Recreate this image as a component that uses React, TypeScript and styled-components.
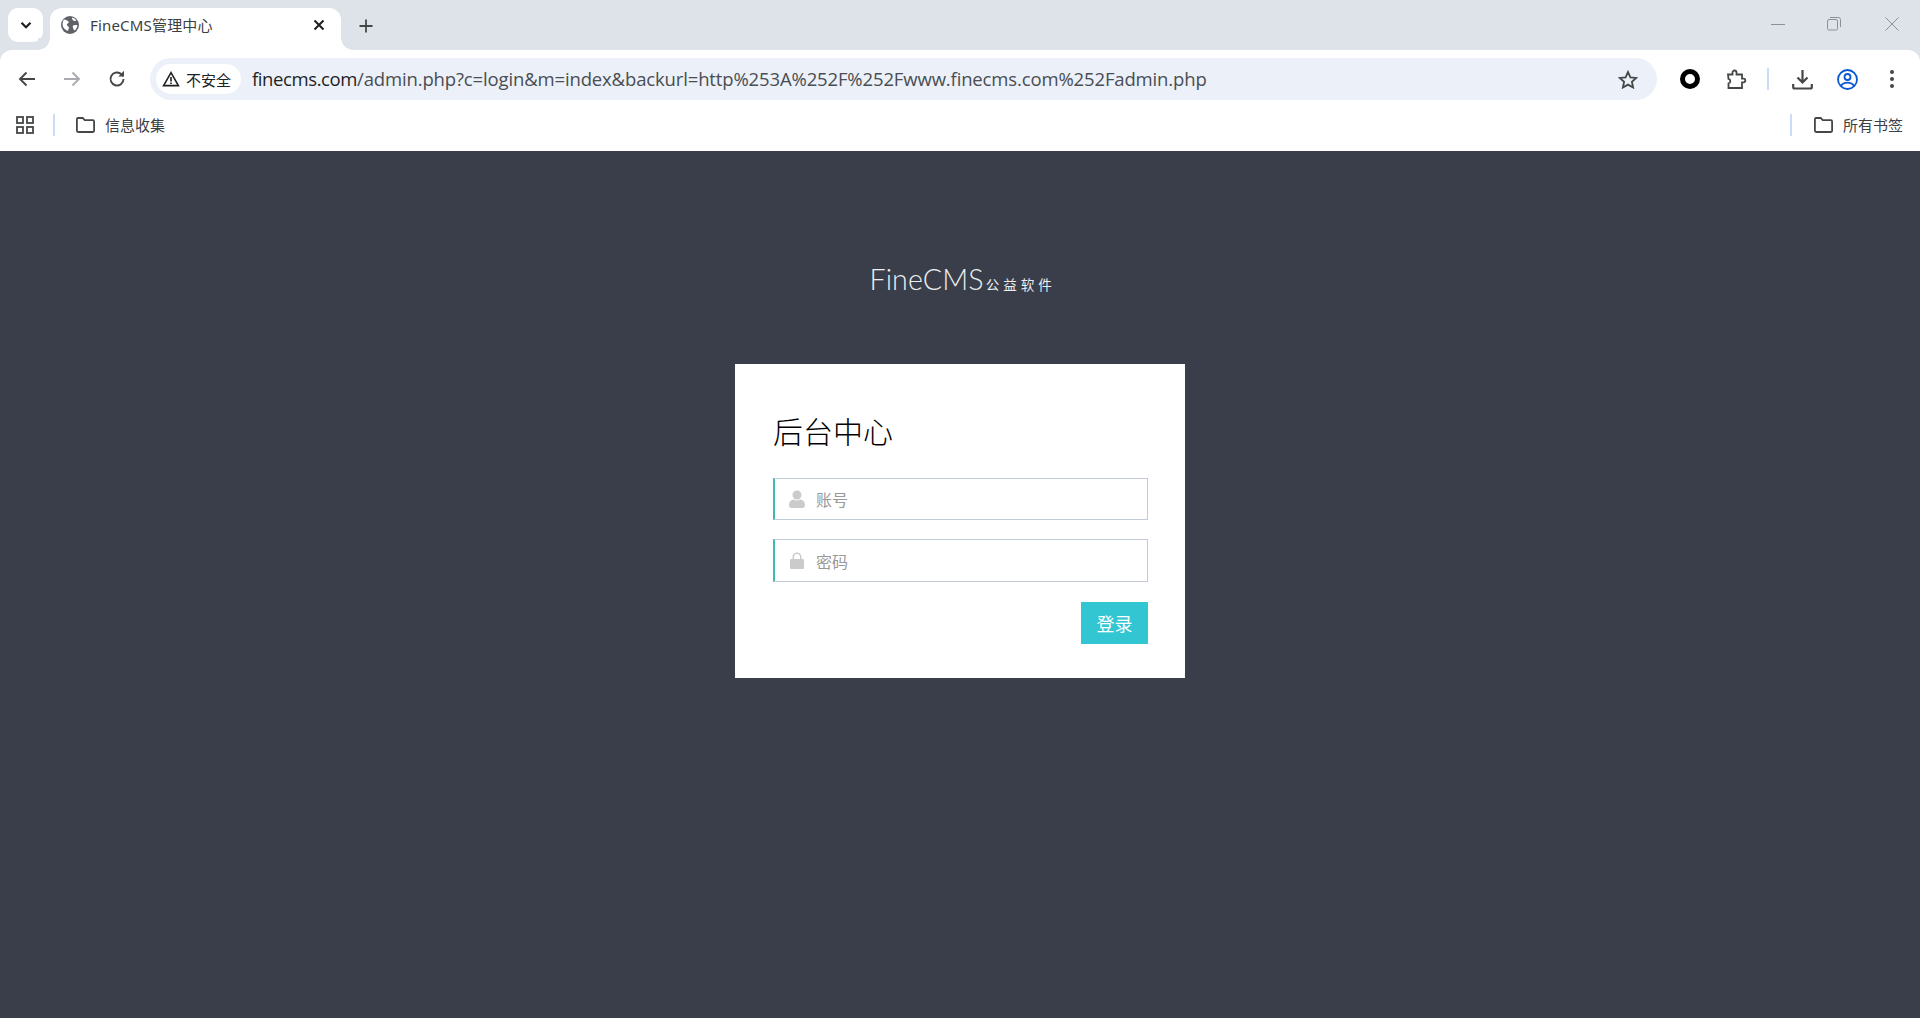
import React from 'react'
import styled, { createGlobalStyle } from 'styled-components'

const UI_FONT = '"Noto Sans", "Noto Sans CJK SC", sans-serif'
const CJK_FONT = '"Noto Sans CJK SC", "Noto Sans", sans-serif'

const GlobalStyle = createGlobalStyle`
  html, body {
    margin: 0;
    padding: 0;
    height: 100%;
    overflow: hidden;
    background: #3a3e4a;
    font-family: ${UI_FONT};
  }
  #root {
    height: 100%;
  }
  * {
    box-sizing: border-box;
  }
`

const Page = styled.div`
  height: 1018px;
  display: flex;
  flex-direction: column;
  background: #dee3ea;
`

const TabStrip = styled.div`
  height: 50px;
  flex: none;
  display: flex;
  align-items: flex-start;
  padding: 8px 0 0 8px;
`

const TabSearch = styled.div`
  width: 35px;
  height: 34px;
  border-radius: 10px;
  background: #fff;
  display: flex;
  align-items: center;
  justify-content: center;
  margin-right: 7px;
`

const Tab = styled.div`
  position: relative;
  width: 291px;
  height: 42px;
  background: #fff;
  border-radius: 12px 12px 0 0;
  display: flex;
  align-items: center;
  padding: 0 16px 8px 11px;

  &::before,
  &::after {
    content: '';
    position: absolute;
    bottom: 0;
    width: 12px;
    height: 12px;
  }
  &::before {
    left: -12px;
    background: radial-gradient(circle at 0 0, #dee3ea 11.5px, #fff 12px);
  }
  &::after {
    right: -12px;
    background: radial-gradient(circle at 100% 0, #dee3ea 11.5px, #fff 12px);
  }
`

const TabTitle = styled.div`
  flex: 1;
  margin-left: 11px;
  font-size: 15px;
  line-height: 20px;
  color: #3c4043;
  white-space: nowrap;
  letter-spacing: 0.18px;
  font-family: ${UI_FONT};
`

const NewTab = styled.div`
  width: 36px;
  height: 36px;
  margin: 0 0 0 7px;
  display: flex;
  align-items: center;
  justify-content: center;
`

const WindowControls = styled.div`
  margin-left: auto;
  display: flex;
  align-items: center;
  height: 32px;
  padding-right: 21px;
`

const WindowControl = styled.svg<{ $gap?: number }>`
  margin-left: ${(p) => p.$gap ?? 0}px;
`

const Toolbar = styled.div`
  height: 57px;
  flex: none;
  background: #fff;
  display: flex;
  align-items: center;
  padding: 1px 10px 0 9px;
  position: relative;
  border-radius: 12px 12px 0 0;
`

const ToolButton = styled.div<{ $gap?: number }>`
  width: 36px;
  height: 36px;
  flex: none;
  margin-left: ${(p) => p.$gap ?? 0}px;
  display: flex;
  align-items: center;
  justify-content: center;
`

const AddressBar = styled.div`
  width: 1507px;
  height: 42px;
  flex: none;
  margin-left: 15px;
  border-radius: 21px;
  background: #ebf0f9;
  display: flex;
  align-items: center;
  padding: 0 19px 0 6px;
`

const SiteChip = styled.div`
  width: 85px;
  height: 30px;
  flex: none;
  background: #fff;
  border-radius: 15px;
  display: flex;
  align-items: center;
  padding-left: 6px;
  gap: 6px;
  font-size: 15px;
  color: #202124;
  font-family: ${CJK_FONT};
  white-space: nowrap;
`

const Url = styled.div`
  flex: 1;
  margin-left: 11px;
  font-size: 18.5px;
  line-height: 24px;
  color: #4a4d52;
  white-space: nowrap;
  overflow: hidden;
  font-family: "Open Sans", "Noto Sans", sans-serif;
  letter-spacing: -0.14px;
`

const UrlHost = styled.span`
  color: #1f1f1f;
  letter-spacing: -0.4px;
`

const ToolDivider = styled.div<{ $gap: number; $right?: number }>`
  width: 2px;
  height: 22px;
  flex: none;
  background: #c9dcf8;
  margin-left: ${(p) => p.$gap}px;
  margin-right: ${(p) => p.$right ?? 0}px;
`

const BookmarkBar = styled.div`
  height: 44px;
  flex: none;
  background: #fff;
  display: flex;
  align-items: center;
  padding: 0 17px 9px 16px;
`

const BookmarkItem = styled.div<{ $gap: number }>`
  margin-left: ${(p) => p.$gap}px;
  display: flex;
  align-items: center;
  gap: 9px;
  font-size: 15px;
  color: #3c4043;
  font-family: ${CJK_FONT};
  white-space: nowrap;
`

const Spacer = styled.div`
  flex: 1;
`

const Main = styled.main`
  flex: 1;
  background: #3a3e4a;
  display: flex;
  flex-direction: column;
  align-items: center;
  padding-top: 111px;
`

const Logo = styled.div`
  height: 36px;
  width: 184px;
  display: flex;
  align-items: baseline;
  color: #eceef0;
  white-space: nowrap;
  margin-left: 3px;
`

const LogoName = styled.span`
  font-family: "Lato", "Liberation Sans", sans-serif;
  font-weight: 300;
  font-size: 28.6px;
  line-height: 34px;
  letter-spacing: 0.1px;
`

const LogoSub = styled.span`
  font-family: ${CJK_FONT};
  font-size: 13.5px;
  letter-spacing: 4px;
  margin-left: 2px;
`

const Card = styled.form`
  width: 450px;
  height: 314px;
  margin-top: 66px;
  background: #fff;
  padding: 46px 37px 0 38px;
  display: flex;
  flex-direction: column;
`

const Title = styled.h3`
  margin: 0;
  height: 40px;
  font-weight: 300;
  font-size: 30px;
  line-height: 40px;
  color: #000;
  font-family: ${CJK_FONT};
`

const Field = styled.label<{ $top: number; $height: number }>`
  height: ${(p) => p.$height}px;
  margin-top: ${(p) => p.$top}px;
  flex: none;
  display: flex;
  align-items: center;
  border: 1px solid #c2cad8;
  border-left: 2px solid #3fb8b2;
  padding-left: 14px;
  gap: 11px;
`

const FieldIcon = styled.span`
  width: 16px;
  flex: none;
  display: flex;
  justify-content: center;
`

const FieldInput = styled.input`
  flex: 1;
  min-width: 0;
  border: 0;
  outline: 0;
  padding: 0;
  background: transparent;
  font-size: 16px;
  font-family: ${CJK_FONT};
  color: #333;

  &::placeholder {
    color: #999;
    opacity: 1;
  }
`

const Actions = styled.div`
  display: flex;
  justify-content: flex-end;
  margin-top: 20px;
`

const LoginButton = styled.button`
  width: 67px;
  height: 42px;
  border: 0;
  padding: 0;
  background: #32c5d2;
  color: #fff;
  font-size: 18px;
  font-family: ${CJK_FONT};
`

const FolderIcon = () => (
  <svg width="21" height="16" viewBox="0 0 21 16" fill="none" stroke="#444746" strokeWidth="1.8">
    <path d="M1.9 2.2a1.2 1.2 0 0 1 1.2-1.2h4.6l2 2.2h8.2a1.2 1.2 0 0 1 1.2 1.2v9.4a1.2 1.2 0 0 1-1.2 1.2H3.1a1.2 1.2 0 0 1-1.2-1.2z" />
  </svg>
)

const App: React.FC = () => (
  <Page>
    <GlobalStyle />
    <TabStrip>
      <TabSearch>
        <svg width="14" height="14" viewBox="0 0 14 14" fill="none" stroke="#1f1f1f" strokeWidth="2.2">
          <path d="M2.5 4.8 7 9.2l4.5-4.4" />
        </svg>
      </TabSearch>
      <Tab>
        <svg width="18" height="18" viewBox="0 0 18 18">
          <circle cx="9" cy="9" r="9" fill="#5f6368" />
          <path d="M3 3.5c2 .2 3.4 1 4.4 2.100.6.8.2 1.600-.6 1.800-.9.2-1.200 1-.8 1.800.5.9 1.600 1 1.900 2 .2.9-.3 2-1 3.600C3.800 14 1.400 11 1.600 8c.1-1.700.5-3.300 1.400-4.500z" fill="#fff" />
          <path d="M11 1.500c1.600.3 3.500 1.500 4.400 3-1 .5-2.200.5-3 0-.9-.5-1.400-1.800-1.400-3zM12 9.500c1.200-.6 3-.7 4.400-.2-.2 2.200-1.200 4-2.800 5.200-1.200-1-2.400-3.700-1.600-5z" fill="#fff" />
        </svg>
        <TabTitle>FineCMS管理中心</TabTitle>
        <svg width="12" height="12" viewBox="0 0 12 12" stroke="#1f1f1f" strokeWidth="2">
          <path d="M1.500 1.500l9 9M10.500 1.500l-9 9" />
        </svg>
      </Tab>
      <NewTab>
        <svg width="14" height="14" viewBox="0 0 14 14" stroke="#444746" strokeWidth="1.8">
          <path d="M7 .5v13M.5 7h13" />
        </svg>
      </NewTab>
      <WindowControls>
        <WindowControl width="14" height="14" viewBox="0 0 14 14" stroke="#8d9196" strokeWidth="1">
          <path d="M0 7.500h14" />
        </WindowControl>
        <WindowControl $gap={42} width="14" height="14" viewBox="0 0 14 14" fill="none" stroke="#8d9196" strokeWidth="1">
          <rect x=".5" y="2.500" width="10" height="10.500" rx="1.500" />
          <path d="M3 .5h8.500a2 2 0 0 1 2 2V10" />
        </WindowControl>
        <WindowControl $gap={44} width="14" height="14" viewBox="0 0 14 14" stroke="#8d9196" strokeWidth="1">
          <path d="M.5.5l13 13M13.500.5l-13 13" />
        </WindowControl>
      </WindowControls>
    </TabStrip>

    <Toolbar>
      <ToolButton>
        <svg width="18" height="16" viewBox="0 0 18 16" fill="none" stroke="#444746" strokeWidth="1.900">
          <path d="M17 8H2M8.500 1.500 2 8l6.500 6.500" />
        </svg>
      </ToolButton>
      <ToolButton $gap={9}>
        <svg width="18" height="16" viewBox="0 0 18 16" fill="none" stroke="#a9abae" strokeWidth="1.900">
          <path d="M1 8h15M9.500 1.500 16 8l-6.500 6.500" />
        </svg>
      </ToolButton>
      <ToolButton $gap={9}>
        <svg width="18" height="18" viewBox="0 0 18 18" fill="none" stroke="#444746" strokeWidth="1.900">
          <path d="M15.500 9a6.500 6.500 0 1 1-1.900-4.600L15.500 6" />
          <path d="M16 .8V6.500h-5.700" fill="#444746" stroke="none" />
        </svg>
      </ToolButton>
      <AddressBar>
        <SiteChip>
          <svg width="18" height="16" viewBox="0 0 18 16" fill="none" stroke="#1f1f1f" strokeWidth="1.600">
            <path d="M9 1.600 1.600 14.600h14.800z" />
            <path d="M9 6v4.500M9 11.500v1.500" />
          </svg>
          不安全
        </SiteChip>
        <Url>
          <UrlHost>finecms.com</UrlHost>
          /admin.php?c=login&amp;m=index&amp;backurl=http%253A%252F%252Fwww.finecms.com%252Fadmin.php
        </Url>
        <svg width="20" height="19" viewBox="0 0 20 19" fill="none" stroke="#444746" strokeWidth="1.800">
          <path d="m10 2 2.400 5.300 5.800.6-4.300 3.900 1.200 5.700L10 14.600l-5.100 2.900 1.200-5.700L1.800 7.900l5.800-.6z" />
        </svg>
      </AddressBar>
      <ToolButton $gap={15}>
        <svg width="20" height="20" viewBox="0 0 20 20" fill="none" stroke="#000" strokeWidth="5">
          <circle cx="10" cy="10" r="7.500" />
        </svg>
      </ToolButton>
      <ToolButton $gap={10}>
        <svg width="21" height="21" viewBox="0 0 21 21" fill="none" stroke="#444746" strokeWidth="1.800">
          <path d="M2 5.500h4.500V3.500a2 2 0 0 1 4 0v2H16v4.200h1.500a1.800 1.800 0 0 1 0 3.600H16V19H2.500v-4.600a2.300 2.300 0 0 0 0-4.500z" />
        </svg>
      </ToolButton>
      <ToolDivider $gap={13} $right={15} />
      <ToolButton>
        <svg width="21" height="21" viewBox="0 0 21 21" fill="none" stroke="#444746" strokeWidth="2.200">
          <path d="M10.500 1v12M5.500 8.500l5 5 5-5" />
          <path d="M1.200 15v3a1.500 1.500 0 0 0 1.500 1.500h15.600a1.500 1.500 0 0 0 1.500-1.500v-3" />
        </svg>
      </ToolButton>
      <ToolButton $gap={9}>
        <svg width="21" height="21" viewBox="0 0 21 21" fill="none" stroke="#0b57d0" strokeWidth="1.800">
          <circle cx="10.500" cy="10.500" r="9.500" />
          <circle cx="10.500" cy="8" r="3" />
          <path d="M4 17c1.500-2.500 4-3.300 6.500-3.300S15.500 14.500 17 17" />
        </svg>
      </ToolButton>
      <ToolButton $gap={9}>
        <svg width="6" height="20" viewBox="0 0 6 20" fill="#444746">
          <circle cx="3" cy="3" r="2" />
          <circle cx="3" cy="10" r="2" />
          <circle cx="3" cy="17" r="2" />
        </svg>
      </ToolButton>
    </Toolbar>

    <BookmarkBar>
      <svg width="18" height="18" viewBox="0 0 18 18" fill="none" stroke="#444746" strokeWidth="1.800">
        <rect x="1" y="1" width="6" height="6" />
        <rect x="11" y="1" width="6" height="6" />
        <rect x="1" y="11" width="6" height="6" />
        <rect x="11" y="11" width="6" height="6" />
      </svg>
      <ToolDivider $gap={19} />
      <BookmarkItem $gap={20}>
        <FolderIcon />
        信息收集
      </BookmarkItem>
      <Spacer />
      <ToolDivider $gap={0} />
      <BookmarkItem $gap={21}>
        <FolderIcon />
        所有书签
      </BookmarkItem>
    </BookmarkBar>

    <Main>
      <Logo>
        <LogoName>FineCMS</LogoName>
        <LogoSub>公益软件</LogoSub>
      </Logo>
      <Card>
        <Title>后台中心</Title>
        <Field $top={28} $height={42}>
          <FieldIcon>
            <svg width="16" height="18" viewBox="0 0 16 18" fill="#cbcbcb">
              <circle cx="8" cy="5" r="4.500" />
              <path d="M0 15c0-3.500 2-5 4.500-5.500 2 1.200 5 1.200 7 0C14 10 16 11.500 16 15c0 2-1 3-2.500 3h-11C1 18 0 17 0 15z" />
            </svg>
          </FieldIcon>
          <FieldInput placeholder="账号" />
        </Field>
        <Field $top={19} $height={43}>
          <FieldIcon>
            <svg width="14" height="17" viewBox="0 0 14 17" fill="#cbcbcb">
              <path d="M2.500 7V5a4.500 4.500 0 0 1 9 0v2H10V5a3 3 0 0 0-6 0v2z" />
              <rect x="0" y="7" width="14" height="10" rx="1.200" />
            </svg>
          </FieldIcon>
          <FieldInput placeholder="密码" />
        </Field>
        <Actions>
          <LoginButton type="button">登录</LoginButton>
        </Actions>
      </Card>
    </Main>
  </Page>
)

export default App
